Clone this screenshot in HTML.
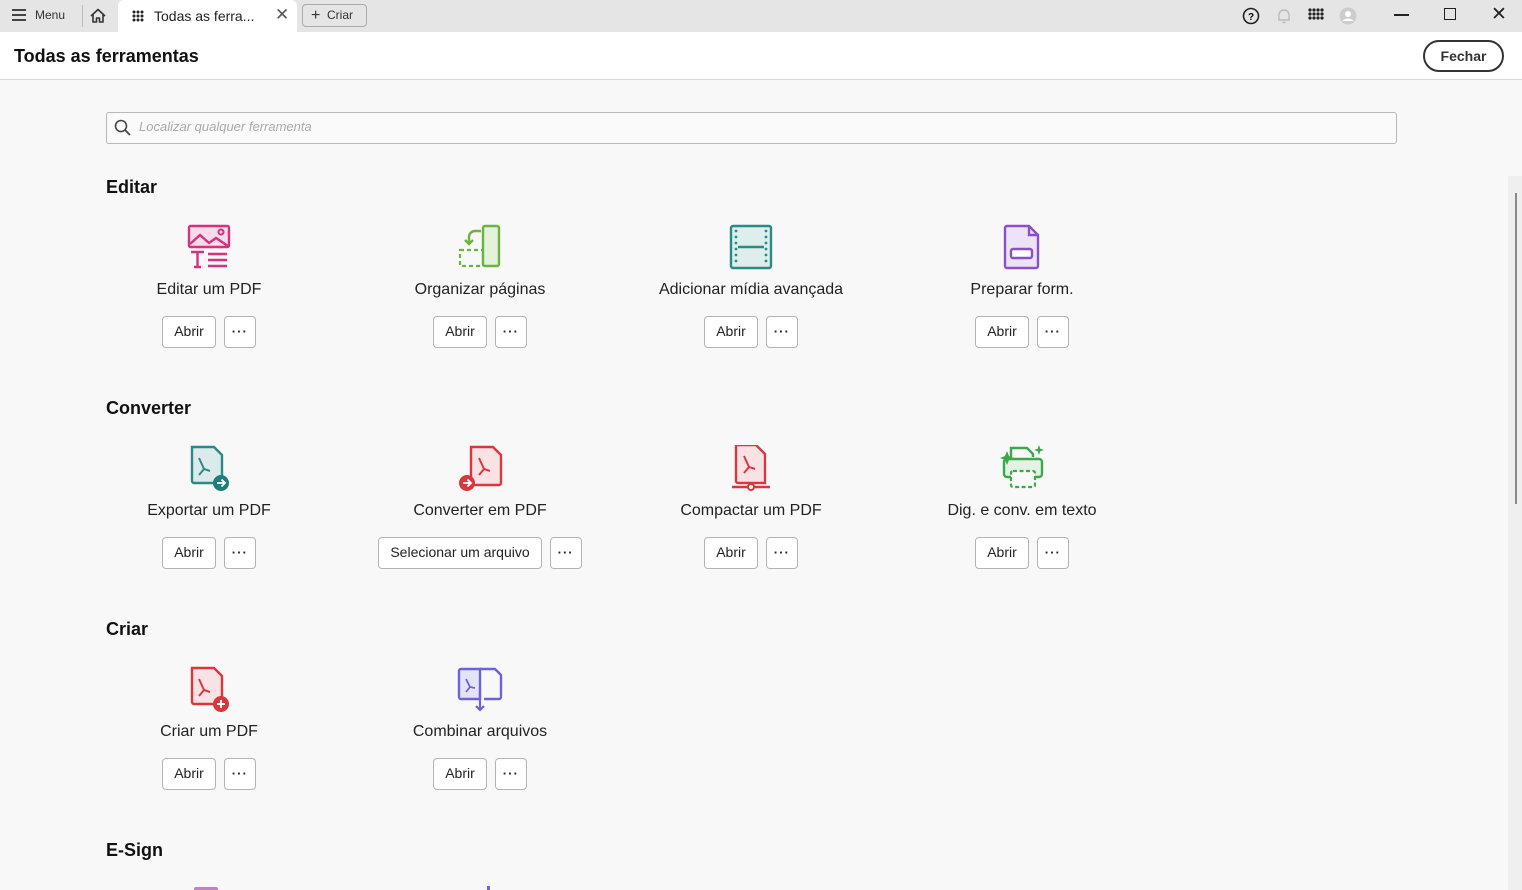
<!DOCTYPE html>
<html><head><meta charset="utf-8"><style>
*{box-sizing:border-box;margin:0;padding:0}
body{width:1522px;height:890px;overflow:hidden;background:#f8f8f8;font-family:"Liberation Sans",Arial,sans-serif;color:#222;position:relative}
.top{position:absolute;left:0;top:0;width:1522px;height:32px;background:#e5e5e5}
.hdr{position:absolute;left:0;top:32px;width:1522px;height:48px;background:#fff;border-bottom:1px solid #d8d8d8}
.abs{position:absolute}
.sec{position:absolute;left:106px;font-weight:bold;font-size:18px;color:#111}
.tool{position:absolute;width:270px;text-align:center}
.tool svg{display:block;margin:0 auto}
.tool .t{font-size:16px;color:#222;margin-top:10px;height:20px;line-height:20px}
.btns{display:flex;justify-content:center;gap:8px;margin-top:16px}
.b{height:32px;border:1px solid #b3b3b3;border-radius:4px;background:#fff;font-size:14px;line-height:28px;padding:0 11px;color:#222}
.d{width:32px;height:32px;border:1px solid #b3b3b3;border-radius:4px;background:#fff;font-size:13px;line-height:30px;text-align:center;letter-spacing:1px;font-weight:bold}
</style></head><body>
<div class="top"></div>
<div class="abs" style="left:12px;top:9px;width:14px;height:2px;background:#444;box-shadow:0 5px 0 #444,0 10px 0 #444"></div>
<div class="abs" style="left:35px;top:8px;font-size:12px;color:#333">Menu</div>
<div class="abs" style="left:82px;top:5px;width:1px;height:22px;background:#bbb"></div>
<svg class="abs" style="left:89px;top:7px" width="18" height="18" viewBox="0 0 18 18"><path d="M2 9 L9 2.5 L16 9 M4 7.5 V15 H7.5 V11 H10.5 V15 H14 V7.5" fill="none" stroke="#333" stroke-width="1.6" stroke-linejoin="round"/></svg>
<div class="abs" style="left:118px;top:0;width:179px;height:32px;background:#fff;border-radius:6px 6px 0 0"></div>
<svg class="abs" style="left:132px;top:10px" width="12" height="12"><g fill="#222"><circle cx="2" cy="2" r="1.5"/><circle cx="6" cy="2" r="1.5"/><circle cx="10" cy="2" r="1.5"/><circle cx="2" cy="6" r="1.5"/><circle cx="6" cy="6" r="1.5"/><circle cx="10" cy="6" r="1.5"/><circle cx="2" cy="10" r="1.5"/><circle cx="6" cy="10" r="1.5"/><circle cx="10" cy="10" r="1.5"/></g></svg>
<div class="abs" style="left:154px;top:8px;font-size:14px;color:#222">Todas as ferra...</div>
<div class="abs" style="left:275px;top:5px;font-size:17px;color:#555">✕</div>
<div class="abs" style="left:302px;top:4px;width:65px;height:23px;border:1px solid #aaa;border-radius:4px;font-size:12px;color:#333;line-height:21px;padding-left:8px"><span style="font-size:16px;vertical-align:-1px">+</span>&nbsp; Criar</div>
<svg class="abs" style="left:1242px;top:7px" width="18" height="18"><circle cx="9" cy="9" r="7.5" fill="none" stroke="#222" stroke-width="1.6"/><text x="9" y="13" font-size="10" font-weight="bold" text-anchor="middle" font-family="Liberation Sans">?</text></svg>
<svg class="abs" style="left:1275px;top:7px" width="18" height="18"><path d="M4 13 V8 a5 5 0 0 1 10 0 V13 H3 H15 M7.5 15.5 h3" fill="none" stroke="#bbb" stroke-width="1.4"/></svg>
<svg class="abs" style="left:1308px;top:8px" width="16" height="16"><g fill="#222"><circle cx="2" cy="2" r="1.6"/><circle cx="6" cy="2" r="1.6"/><circle cx="10" cy="2" r="1.6"/><circle cx="14" cy="2" r="1.6"/><circle cx="2" cy="6" r="1.6"/><circle cx="6" cy="6" r="1.6"/><circle cx="10" cy="6" r="1.6"/><circle cx="14" cy="6" r="1.6"/><circle cx="2" cy="10" r="1.6"/><circle cx="6" cy="10" r="1.6"/><circle cx="10" cy="10" r="1.6"/><circle cx="14" cy="10" r="1.6"/></g></svg>
<svg class="abs" style="left:1339px;top:7px" width="18" height="18"><circle cx="9" cy="9" r="8.5" fill="#ccc"/><circle cx="9" cy="7" r="3" fill="#fff"/><path d="M3.5 14 a6 4 0 0 1 11 0" fill="#fff"/></svg>
<div class="abs" style="left:1394px;top:14px;width:15px;height:2px;background:#222"></div>
<div class="abs" style="left:1444px;top:8px;width:12px;height:12px;border:1.5px solid #222"></div>
<div class="abs" style="left:1491px;top:3px;font-size:19px;color:#222">✕</div>
<div class="hdr"></div>
<div class="abs" style="left:14px;top:46px;font-size:18px;font-weight:bold;color:#111">Todas as ferramentas</div>
<div class="abs" style="left:1423px;top:40px;width:81px;height:32px;border:2px solid #333;border-radius:16px;font-size:14px;font-weight:bold;text-align:center;line-height:28px;color:#333">Fechar</div>
<div class="abs" style="left:106px;top:112px;width:1291px;height:32px;border:1px solid #b8b8b8;border-radius:3px;background:#fafafa"></div>
<svg class="abs" style="left:114px;top:119px" width="18" height="18"><circle cx="7" cy="7" r="5.5" fill="none" stroke="#444" stroke-width="1.6"/><path d="M11 11 L16 16" stroke="#444" stroke-width="1.8"/></svg>
<div class="abs" style="left:139px;top:119px;font-size:13px;font-style:italic;color:#aaa">Localizar qualquer ferramenta</div>
<div class="abs" style="left:1508px;top:176px;width:14px;height:714px;background:#efefef"></div>
<div class="abs" style="left:1515px;top:193px;width:2px;height:311px;background:#8a8a8a"></div>

<div class="sec" style="top:177px">Editar</div>
<div class="sec" style="top:398px">Converter</div>
<div class="sec" style="top:619px">Criar</div>
<div class="sec" style="top:840px">E-Sign</div>

<div class="tool" style="left:74px;top:224px">
<svg width="46" height="46" viewBox="0 0 46 46"><rect x="3" y="2" width="40" height="21" rx="1.5" fill="#f9dbe9" stroke="#d1337f" stroke-width="2.4"/><path d="M4 20 L14 11 L23 19 L30 14 L42 22" fill="none" stroke="#d1337f" stroke-width="2.4"/><circle cx="35" cy="8" r="2.5" fill="none" stroke="#d1337f" stroke-width="2"/><path d="M5 28 H18 M11.5 28 V43 M8 43 H15 M22 30 H41 M22 36 H41 M22 42 H41" stroke="#d1337f" stroke-width="2.4" fill="none"/></svg>
<div class="t">Editar um PDF</div><div class="btns"><div class="b">Abrir</div><div class="d">···</div></div></div>
<div class="tool" style="left:345px;top:224px">
<svg width="46" height="46" viewBox="0 0 46 46"><rect x="26" y="2" width="16" height="40" rx="2" fill="#e4f2dc" stroke="#6cb33f" stroke-width="2.4"/><rect x="3" y="26" width="23" height="16" fill="none" stroke="#6cb33f" stroke-width="2.2" stroke-dasharray="4 3"/><path d="M24 7 H18 a6 6 0 0 0 -6 6 V20 M8 16 L12 20 L16 16" fill="none" stroke="#6cb33f" stroke-width="2.4"/></svg>
<div class="t">Organizar páginas</div><div class="btns"><div class="b">Abrir</div><div class="d">···</div></div></div>
<div class="tool" style="left:616px;top:224px">
<svg width="46" height="46" viewBox="0 0 46 46"><rect x="3" y="2" width="40" height="42" rx="2" fill="#ddeeed" stroke="#2a8a86" stroke-width="2.4"/><path d="M10 23 H36" stroke="#2a8a86" stroke-width="2.4"/><g fill="#2a8a86"><circle cx="8" cy="7" r="1.4"/><circle cx="8" cy="13" r="1.4"/><circle cx="8" cy="19" r="1.4"/><circle cx="8" cy="25" r="1.4"/><circle cx="8" cy="31" r="1.4"/><circle cx="8" cy="37" r="1.4"/><circle cx="38" cy="7" r="1.4"/><circle cx="38" cy="13" r="1.4"/><circle cx="38" cy="19" r="1.4"/><circle cx="38" cy="25" r="1.4"/><circle cx="38" cy="31" r="1.4"/><circle cx="38" cy="37" r="1.4"/></g></svg>
<div class="t">Adicionar mídia avançada</div><div class="btns"><div class="b">Abrir</div><div class="d">···</div></div></div>
<div class="tool" style="left:887px;top:224px">
<svg width="46" height="46" viewBox="0 0 46 46"><path d="M8 2 H30 L39 11 V42 a2 2 0 0 1 -2 2 H8 a2 2 0 0 1 -2 -2 V4 a2 2 0 0 1 2 -2Z" fill="#ede3f7" stroke="#8b4fc9" stroke-width="2.4"/><path d="M30 2 V11 H39" fill="none" stroke="#8b4fc9" stroke-width="2.4"/><rect x="12" y="25" width="21" height="9" rx="2" fill="#fff" stroke="#8b4fc9" stroke-width="2.4"/></svg>
<div class="t">Preparar form.</div><div class="btns"><div class="b">Abrir</div><div class="d">···</div></div></div>

<div class="tool" style="left:74px;top:445px">
<svg width="46" height="46" viewBox="0 0 46 46"><path d="M6 2 H28 L36 10 V38 H8 a2 2 0 0 1 -2 -2Z" fill="#dceaec" stroke="#2a8a86" stroke-width="2.4"/><path d="M13 13 L18 24 L24 26 M18 24 L13 30" fill="none" stroke="#2a8a86" stroke-width="2"/><circle cx="35" cy="38" r="8" fill="#1e7c7a"/><path d="M31 38 H39 M35.5 34.5 L39 38 L35.5 41.5" stroke="#fff" stroke-width="1.8" fill="none"/></svg>
<div class="t">Exportar um PDF</div><div class="btns"><div class="b">Abrir</div><div class="d">···</div></div></div>
<div class="tool" style="left:345px;top:445px">
<svg width="46" height="46" viewBox="0 0 46 46"><path d="M14 2 H36 L44 10 V38 a2 2 0 0 1 -2 2 H16 a2 2 0 0 1 -2 -2Z" fill="#f9e2e3" stroke="#d7373f" stroke-width="2.4"/><path d="M22 13 L27 24 L33 26 M27 24 L22 30" fill="none" stroke="#d7373f" stroke-width="2"/><circle cx="10" cy="38" r="8" fill="#d7373f"/><path d="M6 38 H14 M10.5 34.5 L14 38 L10.5 41.5" stroke="#fff" stroke-width="1.8" fill="none"/></svg>
<div class="t">Converter em PDF</div><div class="btns"><div class="b">Selecionar um arquivo</div><div class="d">···</div></div></div>
<div class="tool" style="left:616px;top:445px">
<svg width="46" height="46" viewBox="0 0 46 46"><path d="M8 0 H28 L37 9 V38 H10 a2 2 0 0 1 -2 -2Z" fill="#f9e2e3" stroke="#d7373f" stroke-width="2.4"/><path d="M16 11 L21 22 L27 24 M21 22 L16 28" fill="none" stroke="#d7373f" stroke-width="2"/><path d="M4 42 H42" stroke="#d7373f" stroke-width="2.4"/><circle cx="23" cy="42" r="3" fill="#fff" stroke="#d7373f" stroke-width="2"/></svg>
<div class="t">Compactar um PDF</div><div class="btns"><div class="b">Abrir</div><div class="d">···</div></div></div>
<div class="tool" style="left:887px;top:445px">
<svg width="46" height="46" viewBox="0 0 46 46"><path d="M12 12 V3 H28 L34 9 V12" fill="none" stroke="#3da74e" stroke-width="2.4"/><rect x="5" y="14" width="38" height="18" rx="3" fill="#e3f2e4" stroke="#3da74e" stroke-width="2.4"/><rect x="12" y="26" width="24" height="16" rx="2" fill="#f8f8f8" stroke="#3da74e" stroke-width="2.2" stroke-dasharray="4 2.5"/><path d="M8 6 L10 11 L15 13 L10 15 L8 20 L6 15 L1 13 L6 11Z" fill="#3da74e"/><path d="M40 0 L41.3 3.7 L45 5 L41.3 6.3 L40 10 L38.7 6.3 L35 5 L38.7 3.7Z" fill="#3da74e"/></svg>
<div class="t">Dig. e conv. em texto</div><div class="btns"><div class="b">Abrir</div><div class="d">···</div></div></div>

<div class="tool" style="left:74px;top:666px">
<svg width="46" height="46" viewBox="0 0 46 46"><path d="M6 2 H28 L36 10 V38 H8 a2 2 0 0 1 -2 -2Z" fill="#f9e2e3" stroke="#d7373f" stroke-width="2.4"/><path d="M13 13 L18 24 L24 26 M18 24 L13 30" fill="none" stroke="#d7373f" stroke-width="2"/><circle cx="35" cy="38" r="8" fill="#d7373f"/><path d="M31 38 H39 M35 34 V42" stroke="#fff" stroke-width="2"/></svg>
<div class="t">Criar um PDF</div><div class="btns"><div class="b">Abrir</div><div class="d">···</div></div></div>
<div class="tool" style="left:345px;top:666px">
<svg width="50" height="46" viewBox="0 0 50 46"><path d="M4 5 a2 2 0 0 1 2 -2 H25 V33 H6 a2 2 0 0 1 -2 -2Z" fill="#e4e4f7" stroke="#6b63d6" stroke-width="2.4"/><path d="M25 3 H40 L46 9 V31 a2 2 0 0 1 -2 2 H29" fill="none" stroke="#6b63d6" stroke-width="2.4"/><path d="M11 13 L15 21 L20 22 M15 21 L11 26" fill="none" stroke="#6b63d6" stroke-width="1.8"/><path d="M25 23 V44 M21 40 L25 44 L29 40" fill="none" stroke="#6b63d6" stroke-width="2.2"/></svg>
<div class="t">Combinar arquivos</div><div class="btns"><div class="b">Abrir</div><div class="d">···</div></div></div>

<div class="abs" style="left:194px;top:887px;width:24px;height:3px;background:#c77ed0;border-radius:2px 2px 0 0"></div>
<div class="abs" style="left:487px;top:886px;width:3px;height:4px;background:#6b63d6"></div>
</body></html>
